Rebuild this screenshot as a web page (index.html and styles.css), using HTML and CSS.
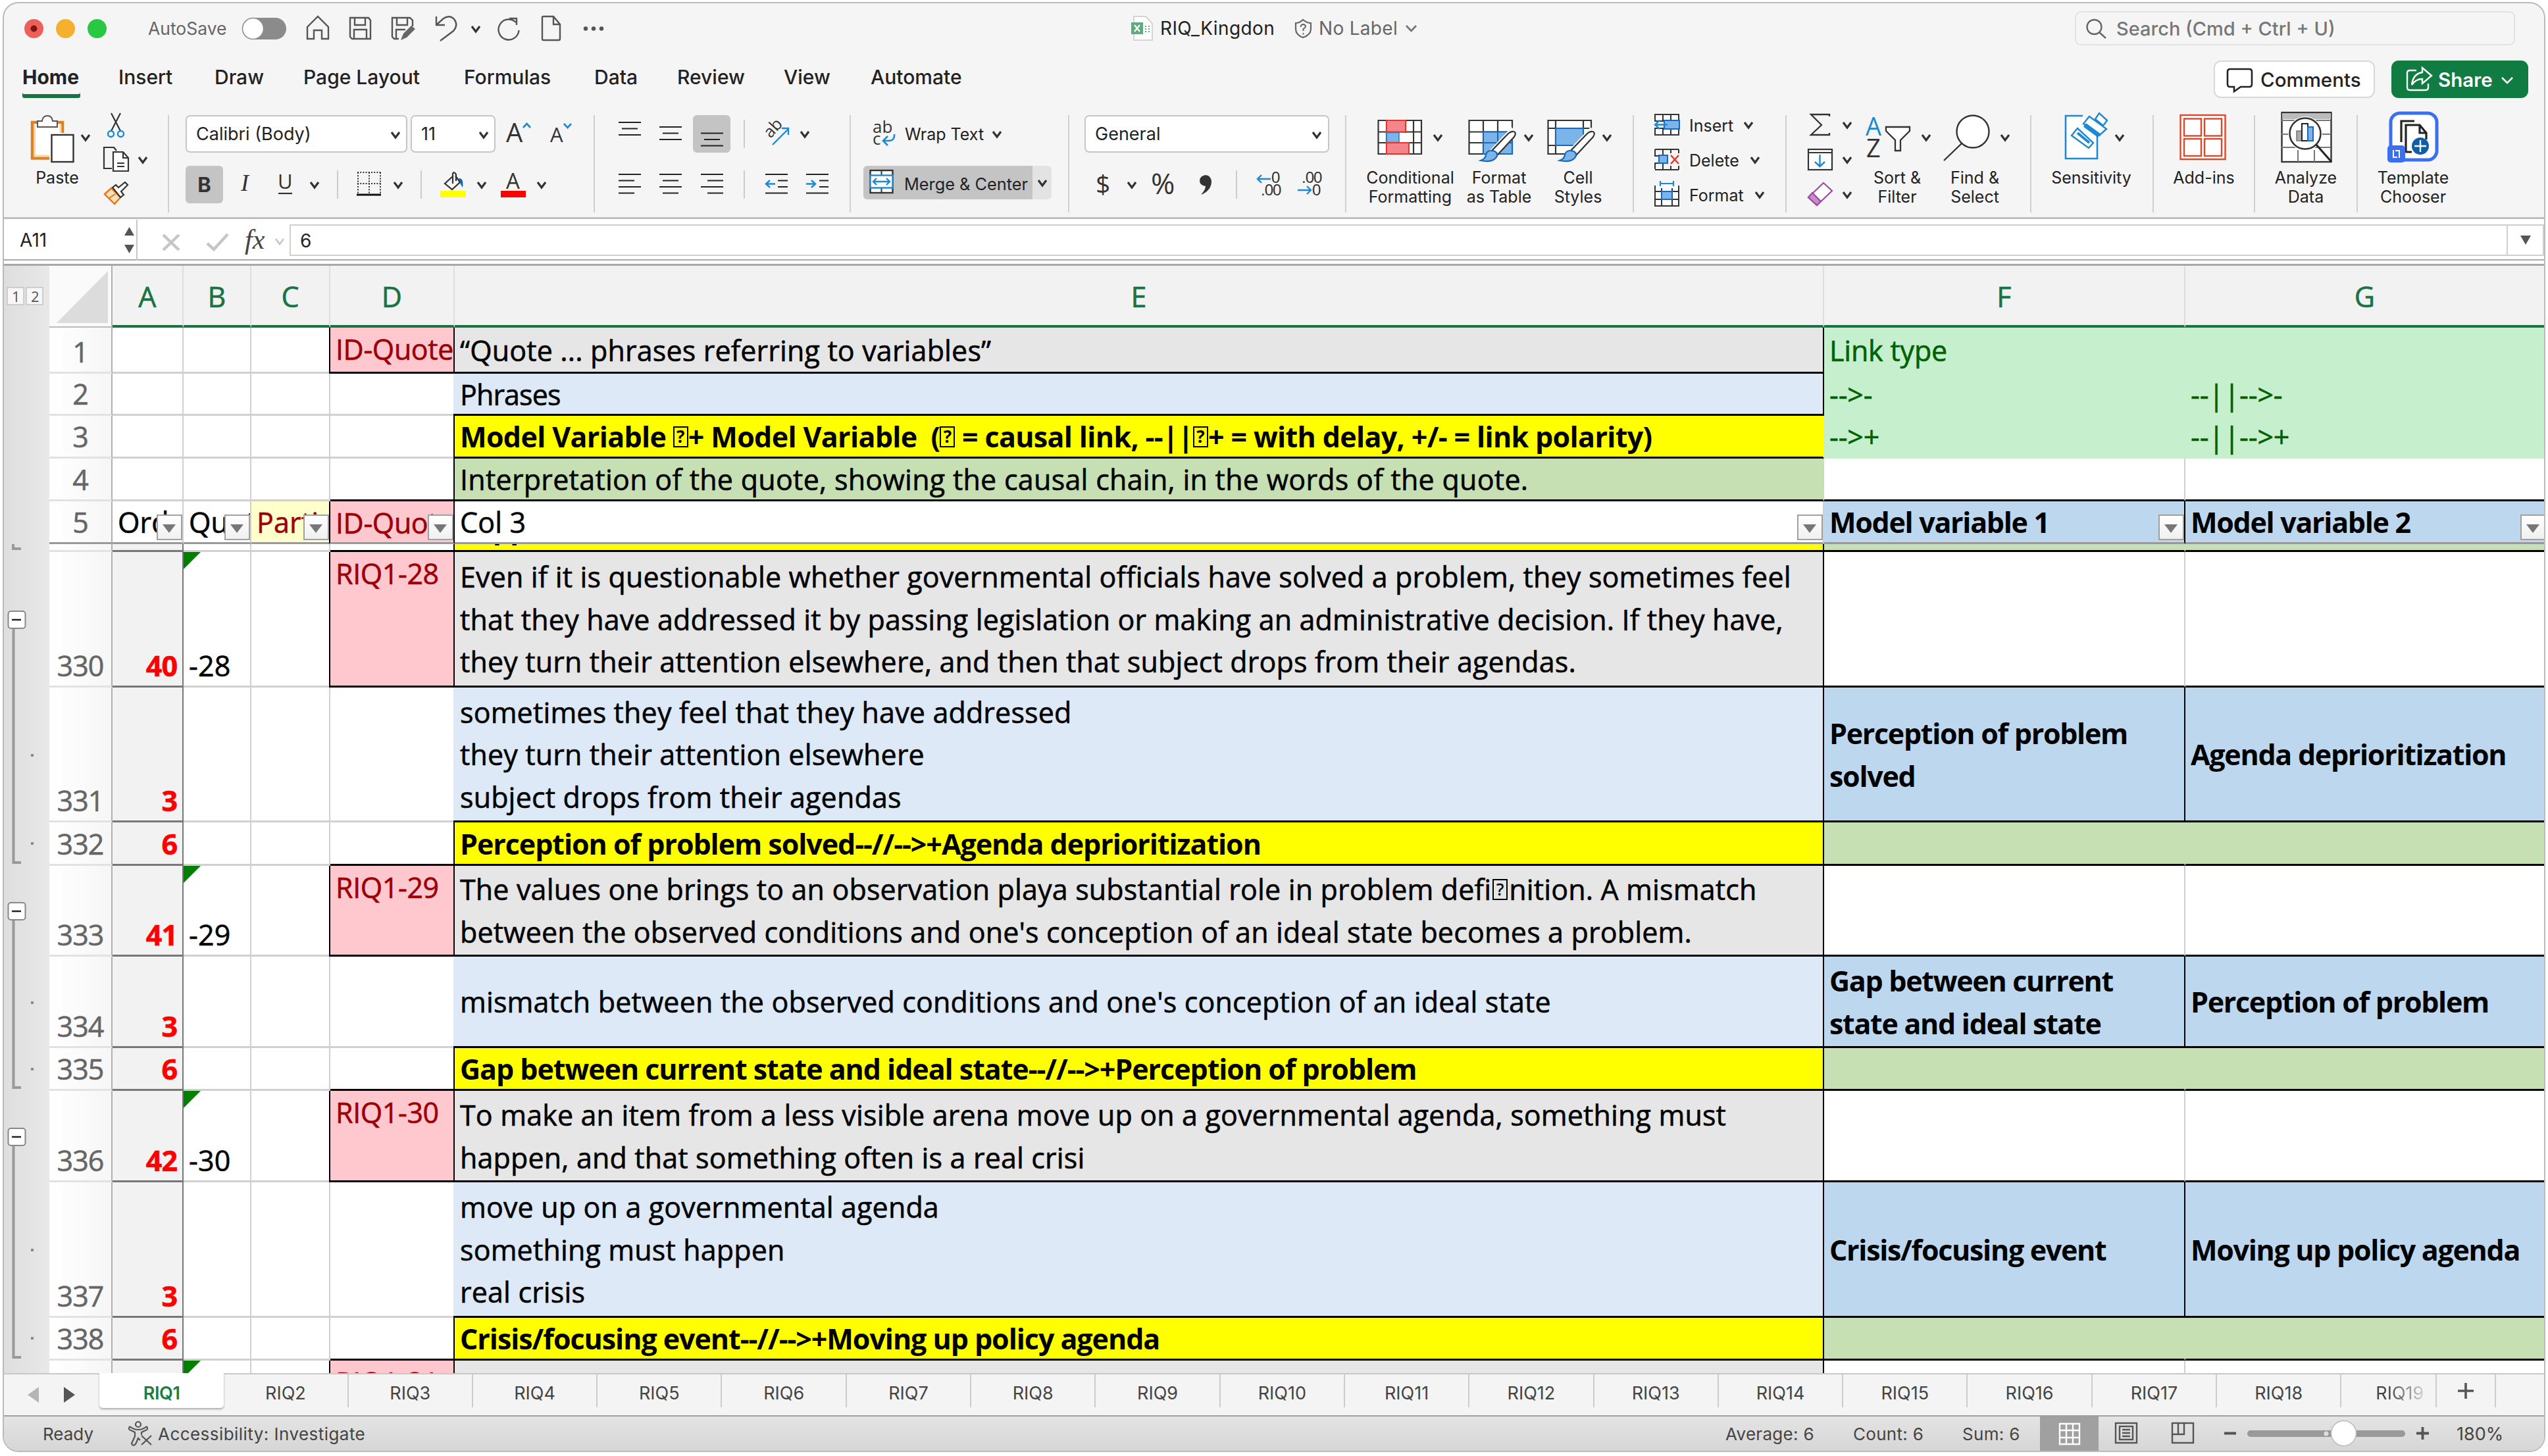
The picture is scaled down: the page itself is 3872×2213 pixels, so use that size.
FILE: index.html
```html
<!DOCTYPE html>
<html lang="en">
<head>
    <meta charset="UTF-8">
    <meta name="viewport" content="width=device-width, initial-scale=1.0">
    <title>RIQ_Kingdon</title>
    <link rel="stylesheet" href="styles.css">
</head>
<body>
<svg class="defs" width="0" height="0">
    <defs>
        <path id="chev" d="M-6 -4 L0 4 L6 -4" fill="none" stroke="#333" stroke-width="3.2"/>
    </defs>
</svg>
<div class="window">
    <header class="titlebar">
        <svg width="219" height="76" viewBox="6 5 219 76">
            <circle cx="51.5" cy="43.5" r="14.5" fill="#ec6059"/><circle cx="51.5" cy="43.5" r="5" fill="#7d1510"/>
            <circle cx="99.5" cy="43.5" r="14.5" fill="#f5b02e"/>
            <circle cx="147.5" cy="43.5" r="14.5" fill="#28c840"/>
        </svg>
        <span class="autosave">AutoSave</span>
        <svg width="585" height="76" viewBox="350 5 585 76">
            <rect x="368" y="27" width="67" height="33" rx="16.5" fill="#8b8b8b"/>
            <circle cx="384.500" cy="43.500" r="16" fill="#fff" stroke="#8b8b8b" stroke-width="1.500"/>
            <g fill="none" stroke="#555" stroke-width="2.4">
                <path d="M467 41 L483 25 L499 41 V59 H489 V46 H477 V59 H467 Z"/>
                <path d="M532 27H560L563 31V59H535L532 56ZM539 27V38H555V27M538 59V45H557V59"/>
                <path d="M606 59H599L596 56V27H623L627 31V40M603 27V38H619V27M602 59V45H616"/>
                <path d="M609 61L613 51L625 39L631 44L618 57Z" fill="#666" stroke="none"/>
                <path d="M663 25V38H676M664 37L674 28Q683 22 690 29Q697 38 689 47L669 62"/>
                <path d="M774 28H785V38M784 34A15.500 15.500 0 1 0 788.500 46"/>
                <path d="M824 26Q824 25 826 25H841L851 37V59Q851 61 849 61H826Q824 61 824 59ZM841 25V37H851"/>
            </g>
            <use href="#chev" x="723" y="44"/>
            <g fill="#555"><circle cx="890" cy="43.500" r="3.200"/><circle cx="902" cy="43.500" r="3.200"/><circle cx="914" cy="43.500" r="3.200"/></g>
        </svg>
        <svg class="file-icon" width="53" height="76" viewBox="1710 5 53 76">
            <path d="M1723 25H1741L1751 36V61H1723Z" fill="#fff" stroke="#c9c9c9" stroke-width="1.500"/>
            <rect x="1719" y="34" width="18" height="18" fill="#5faa7f"/>
            <path d="M1724 38L1732 48M1732 38L1724 48" stroke="#fff" stroke-width="2.200"/>
            <path d="M1740 40h2m3 0h2m-7 4h2m3 0h2m-7 4h2m3 0h2" stroke="#5faa7f" stroke-width="2"/>
        </svg>
        <span class="doc-name">RIQ_Kingdon</span>
        <svg width="66" height="76" viewBox="1938 5 66 76">
            <path d="M1980 30Q1986 35 1992 35V44Q1992 53 1980 57Q1969 53 1969 44V35Q1975 35 1980 30Z" fill="none" stroke="#666" stroke-width="2.200"/>
            <path d="M1976.500 41Q1977 37 1980.500 37Q1984 37.500 1984 40.500Q1983 43 1980.500 44V47M1980.500 50v2.500" fill="none" stroke="#666" stroke-width="2"/>
        </svg>
        <span class="no-label">No Label</span>
        <svg width="40" height="76" viewBox="2125 5 40 76"><path d="M2137 39L2144.500 47L2152 39" fill="none" stroke="#777" stroke-width="2.800"/></svg>
        <div class="search">
            <svg width="61" height="52" viewBox="3155 17 61 52"><circle cx="3182.500" cy="41" r="11" fill="none" stroke="#666" stroke-width="2.400"/><path d="M3190 49L3200 58" stroke="#666" stroke-width="2.400"/></svg>
            <span>Search (Cmd + Ctrl + U)</span>
        </div>
    </header>

    <nav class="menu">
        <a class="m1 on">Home</a><a class="m2">Insert</a><a class="m3">Draw</a><a class="m4">Page Layout</a><a class="m5">Formulas</a><a class="m6">Data</a><a class="m7">Review</a><a class="m8">View</a><a class="m9">Automate</a>
        <div class="btn comments">
            <svg width="51" height="55" viewBox="3386 92 51 55"><path d="M3391 104H3420Q3424 104 3424 108V127Q3424 131 3420 131H3407L3397 138V131H3391Q3387 131 3387 127V108Q3387 104 3391 104Z" fill="none" stroke="#222" stroke-width="2.600"/></svg>
            Comments
        </div>
        <div class="btn share">
            <svg width="51" height="57" viewBox="3657 91 51 57"><g fill="none" stroke="#fff" stroke-width="2.400"><path d="M3675 106H3665Q3661 106 3661 110V132Q3661 136 3665 136H3689Q3693 136 3693 132V126"/><path d="M3684 102L3698 114L3684 126V119Q3674 119 3668 128Q3670 111 3684 109Z"/></g></svg>
            Share
            <svg width="38" height="57" viewBox="3796 91 38 57"><path d="M3810 117L3818 125L3826 117" fill="none" stroke="#fff" stroke-width="2.600"/></svg>
        </div>
    </nav>

    <div class="ribbon">
        <!-- clipboard -->
        <div class="group g-clip">
            <div class="big paste">
                <svg width="130" height="81" viewBox="22 175 130 81">
                    <path d="M49 185H95V241H49Z" fill="#fff"/>
                    <path d="M75 240.500H49V186H56M88 186H95V202" fill="none" stroke="#d9822b" stroke-width="4.500"/>
                    <path d="M75 237H52.500V190M92 190V202" fill="none" stroke="#fbd7a0" stroke-width="3"/>
                    <path d="M57 193V184H64Q65 176 72 176Q79 176 80 184H87V193Z" fill="#fff" stroke="#555" stroke-width="2"/>
                    <rect x="78.500" y="205" width="33" height="41" fill="#fff" stroke="#333" stroke-width="2.400"/>
                    <use href="#chev" x="130" y="209"/>
                </svg>
                <span>Paste</span>
            </div>
            <svg width="100" height="148" viewBox="152 175 100 148">
                <path d="M169 172L183 199M183 172L169 199" stroke="#333" stroke-width="2.200"/>
                <g fill="none" stroke="#1e88d2" stroke-width="2.400"><circle cx="168.500" cy="203.500" r="4.500"/><circle cx="183.500" cy="203.500" r="4.500"/></g>
                <g fill="#fff" stroke="#333" stroke-width="2.200"><path d="M170 256H158V224H173L177 229" fill="none"/><path d="M172 231H187L195 240V260H172Z"/><path d="M187 231V240H195M178 248H189M178 253H189" fill="none"/></g>
                <use href="#chev" x="217" y="243"/>
                <path d="M159 295L169 286L183 300L174 310Z" fill="#fde0b4" stroke="#e8751a" stroke-width="2.400"/>
                <path d="M166 301L175 295" stroke="#e8751a" stroke-width="2"/>
                <path d="M171 285L176 281L180 285L190 277L194 281L184 291L188 296L183 300Z" fill="#fff" stroke="#333" stroke-width="2.200"/>
            </svg>
        </div>

        <!-- font -->
        <div class="group g-font">
            <div class="line">
                <div class="combo font-name">Calibri (Body)<svg width="25" height="20" viewBox="0 0 25 20"><use href="#chev" x="14" y="11"/></svg></div>
                <div class="combo font-size">11<svg width="25" height="20" viewBox="0 0 25 20"><use href="#chev" x="14" y="11"/></svg></div>
                <svg width="148" height="57" viewBox="753 175 148 57">
                    <text x="769" y="216" class="thin" font-size="40">A</text><path d="M795 194L800.500 188L806 194" fill="none" stroke="#1e88d2" stroke-width="2.600"/>
                    <text x="836" y="216" class="thin" font-size="31">A</text><path d="M857 188L862.500 194L868 188" fill="none" stroke="#1e88d2" stroke-width="2.600"/>
                </svg>
            </div>
            <div class="line">
                <div class="pressed bold">B</div>
                <svg width="174" height="57" viewBox="339 252 174 57">
                    <text x="366" y="290" class="ital" font-size="36">I</text>
                    <text x="422" y="287" class="thin" font-size="31">U</text><path d="M423 294H444" stroke="#333" stroke-width="2.200"/>
                    <use href="#chev" x="478" y="281"/>
                    <path d="M513 259V302" stroke="#ccc" stroke-width="2"/>
                </svg>
                <svg width="127" height="57" viewBox="513 252 127 57">
                    <path d="M543 262H579M544 262V294M578 262V294M543 279H579M561 262V294" stroke="#333" stroke-width="2" stroke-dasharray="2 2.200"/>
                    <path d="M542 296H579" stroke="#111" stroke-width="3"/>
                    <use href="#chev" x="605" y="281"/>
                    <path d="M640 259V302" stroke="#ccc" stroke-width="2"/>
                </svg>
                <svg width="261" height="57" viewBox="640 252 261 57">
                    <path d="M688 268L676 279L687 288L699 277L692 267M688 279V264Q690 260 693 265V275" fill="none" stroke="#333" stroke-width="2.200"/>
                    <path d="M697 271Q705 270 703 285Q700 281 699 277Z" fill="#1565b5"/>
                    <rect x="669" y="290" width="39" height="10" fill="#ff0"/>
                    <use href="#chev" x="732" y="281"/>
                    <text x="769" y="287" class="thin" font-size="33">A</text>
                    <rect x="761" y="290" width="38" height="10" fill="red"/>
                    <use href="#chev" x="823" y="281"/>
                </svg>
            </div>
        </div>

        <!-- alignment -->
        <div class="group g-align">
            <div class="line">
                <svg width="149" height="57" viewBox="904 175 149 57"><path d="M940 186H974M945 195.500H969M940 205H974M1002 193H1036M1007 202.500H1031M1002 212H1036" stroke="#222" stroke-width="2.200"/></svg>
                <div class="pressed"><svg width="57" height="57" viewBox="1053 175 57 57"><path d="M1065 202.500H1099M1070 212H1094M1065 221.500H1099" stroke="#222" stroke-width="2.200"/></svg></div>
                <svg width="180" height="57" viewBox="1110 175 180 57">
                    <path d="M1131 182V225" stroke="#ccc" stroke-width="2"/>
                    <text x="1171" y="211" class="thin" font-size="25" transform="rotate(-48 1171 211)">ab</text>
                    <path d="M1174 220L1198 196M1188 195H1198V205" fill="none" stroke="#1e88d2" stroke-width="2.400"/>
                    <use href="#chev" x="1223" y="204"/>
                </svg>
            </div>
            <div class="line">
                <svg width="386" height="57" viewBox="904 252 386 57">
                    <path d="M940 265H974M940 274.500H964M940 284H974M940 293.500H964M1002 265H1036M1007 274.500H1031M1002 284H1036M1007 293.500H1031M1065 265H1099M1075 274.500H1099M1065 284H1099M1075 293.500H1099M1163 265H1197M1182 274.500H1197M1182 284H1197M1163 293.500H1197M1225 265H1259M1245 274.500H1259M1245 284H1259M1225 293.500H1259" stroke="#222" stroke-width="2.200"/>
                    <path d="M1131 259V302" stroke="#ccc" stroke-width="2"/>
                    <path d="M1178 279.500H1164M1170 274L1164 279.500L1170 285M1225 279.500H1239M1233 274L1239 279.500L1233 285" fill="none" stroke="#1e88d2" stroke-width="2.400"/>
                </svg>
            </div>
        </div>

        <!-- wrap / merge -->
        <div class="group g-wrap">
            <div class="line">
                <svg width="63" height="57" viewBox="1312 175 63 57">
                    <text x="1326" y="202" class="thin" font-size="26">ab</text><text x="1326" y="220" class="thin" font-size="26">c</text>
                    <path d="M1359 204Q1360 214 1350 214H1342M1349 207L1342 214L1349 221" fill="none" stroke="#1e88d2" stroke-width="2.600"/>
                </svg>
                <span class="lbl wrap-lbl">Wrap Text</span>
                <svg width="40" height="57" viewBox="1495 175 40 57"><use href="#chev" x="1515" y="204"/></svg>
            </div>
            <div class="line merge">
                <div class="merge-main">
                    <svg width="62" height="57" viewBox="1312 252 62 57">
                        <rect x="1322.500" y="262" width="34" height="34" fill="#fff" stroke="#333" stroke-width="2.400"/>
                        <path d="M1339.500 262V296" stroke="#333" stroke-width="2"/>
                        <rect x="1322.500" y="269.500" width="34" height="19" fill="#fff" stroke="#1e88d2" stroke-width="2.400"/>
                        <path d="M1327 279H1352M1332 274L1327 279L1332 284M1347 274L1352 279L1347 284" fill="none" stroke="#1e88d2" stroke-width="2.400"/>
                    </svg>
                    <span class="lbl merge-lbl">Merge &amp; Center</span>
                </div>
                <svg width="29" height="57" viewBox="1569 252 29 57"><use href="#chev" x="1584" y="281"/></svg>
            </div>
        </div>

        <!-- number -->
        <div class="group g-num">
            <div class="line">
                <div class="combo num-fmt">General<svg width="25" height="20" viewBox="0 0 25 20"><use href="#chev" x="13" y="11"/></svg></div>
            </div>
            <div class="line">
                <svg width="254" height="57" viewBox="1625 252 254 57">
                    <text x="1665" y="294" class="thin" font-size="39">$</text>
                    <use href="#chev" x="1720" y="281"/>
                    <text x="1749" y="295" class="thin" font-size="44">%</text>
                    <path d="M1832 266Q1841 267 1841 277Q1840 290 1825 296Q1832 288 1832 283Q1823 282 1823 274Q1824 267 1832 266Z" fill="#333"/>
                    <path d="M1879 259V302" stroke="#ccc" stroke-width="2"/>
                </svg>
                <svg width="164" height="57" viewBox="1879 252 164 57">
                    <g class="dec"><text x="1932" y="278">0</text><text x="1916" y="297">.00</text><text x="1978" y="278">.00</text><text x="1994" y="297">0</text></g>
                    <path d="M1931 272H1911M1917 266L1911 272L1917 278M1972 289H1992M1986 283L1992 289L1986 295" fill="none" stroke="#1e88d2" stroke-width="2.400"/>
                </svg>
            </div>
        </div>

        <!-- styles -->
        <div class="group g-styles">
            <div class="big cond">
                <svg width="142" height="81" viewBox="2072 175 142 81">
                    <path d="M2094.500 183H2160V234H2094.500ZM2107 183V234M2136 183V234M2148 183V234M2094 200.500H2160M2094 217H2160" fill="#fff" stroke="#333" stroke-width="2.200"/>
                    <rect x="2127" y="202" width="20" height="14" fill="#fff"/>
                    <rect x="2107" y="183" width="29" height="17.500" fill="#f4858b" stroke="#e5352b" stroke-width="2"/>
                    <rect x="2107" y="201.500" width="19" height="15" fill="#7ab4e8" stroke="#2a7ac8" stroke-width="1.500"/>
                    <rect x="2107" y="217" width="34" height="17" fill="#f4858b" stroke="#e5352b" stroke-width="2"/>
                    <use href="#chev" x="2185" y="209"/>
                </svg>
                <span>Conditional<br>Formatting</span>
            </div>
            <div class="big fmt-table">
                <svg width="128" height="81" viewBox="2214 175 128 81">
                    <path d="M2232.500 183H2298V234H2232.500ZM2254 183V234M2276 183V234M2232 200.500H2298M2232 217H2298" fill="#fff" stroke="#333" stroke-width="2.200"/>
                    <path d="M2254 200.500H2298V234H2254ZM2276 200V234M2254 217H2298" fill="#7ab4e8" stroke="#1c68b8" stroke-width="2"/>
                    <path d="M2302 198L2268 234" stroke="#f5f5f5" stroke-width="14"/>
                    <path d="M2300 200Q2305 201 2301 208L2276 235Q2272 229 2267 229L2292 203Q2297 199 2300 200Z" fill="#fff" stroke="#333" stroke-width="2.200"/>
                    <path d="M2265 229Q2276 229 2275 237Q2270 248 2250 244Q2258 241 2258 235Q2260 229 2265 229Z" fill="#7ab4e8" stroke="#1c68b8" stroke-width="2.200"/>
                    <use href="#chev" x="2323" y="209"/>
                </svg>
                <span>Format<br>as Table</span>
            </div>
            <div class="big cell-styles">
                <svg width="112" height="81" viewBox="2342 175 112 81">
                    <path d="M2352.500 183H2418V234H2352.500ZM2364 183V234M2406 183V234M2352 195H2418M2352 221H2418" fill="#fff" stroke="#333" stroke-width="2.200"/>
                    <rect x="2364" y="195" width="42" height="26" fill="#7ab4e8" stroke="#1c68b8" stroke-width="2"/>
                    <path d="M2422 198L2390 232V238H2420V212Z" fill="#f5f5f5"/><path d="M2422 198L2388 234" stroke="#f5f5f5" stroke-width="14"/>
                    <path d="M2420 200Q2425 201 2421 208L2396 235Q2392 229 2387 229L2412 203Q2417 199 2420 200Z" fill="#fff" stroke="#333" stroke-width="2.200"/>
                    <path d="M2385 229Q2396 229 2395 237Q2390 248 2370 244Q2378 241 2378 235Q2380 229 2385 229Z" fill="#7ab4e8" stroke="#1c68b8" stroke-width="2.200"/>
                    <use href="#chev" x="2442" y="209"/>
                </svg>
                <span>Cell<br>Styles</span>
            </div>
        </div>

        <!-- cells -->
        <div class="group g-cells">
            <div class="item">
                <svg width="84" height="53" viewBox="2483 164 84 53">
                    <path d="M2515 174H2551V205H2515ZM2527 174V205M2539 174V205M2515 184H2551M2515 195H2551" fill="#fff" stroke="#333" stroke-width="2"/>
                    <rect x="2513" y="185" width="16" height="9" fill="#fff"/>
                    <rect x="2529" y="183" width="23" height="13" fill="#7ab4e8" stroke="#1c68b8" stroke-width="2"/>
                    <path d="M2534 189.500H2515M2522 183L2515 189.500L2522 196" fill="none" stroke="#1e88d2" stroke-width="2.400"/>
                </svg>
                <span class="lbl">Insert</span>
                <svg width="40" height="53" viewBox="0 0 40 53"><use href="#chev" x="23" y="26"/></svg>
            </div>
            <div class="item">
                <svg width="84" height="53" viewBox="2483 217 84 53">
                    <path d="M2515 227H2551M2515 227V237H2533M2515 257V248H2533M2515 258H2551M2527 227V237M2539 227V233M2527 248V258M2539 252V258M2551 227V233M2551 252V258" fill="none" stroke="#333" stroke-width="2"/>
                    <rect x="2521" y="236" width="13" height="12" fill="#7ab4e8" stroke="#1c68b8" stroke-width="2"/>
                    <path d="M2539 236L2551 249M2551 236L2539 249" stroke="#e5352b" stroke-width="2.400"/>
                </svg>
                <span class="lbl">Delete</span>
                <svg width="40" height="53" viewBox="0 0 40 53"><use href="#chev" x="24" y="26"/></svg>
            </div>
            <div class="item">
                <svg width="84" height="53" viewBox="2483 270 84 53">
                    <path d="M2515 282V313H2551V282M2525 286V313M2541 286V313M2515 291H2551M2515 303H2551" fill="#fff" stroke="#333" stroke-width="2"/>
                    <rect x="2525" y="291" width="16" height="12" fill="#7ab4e8" stroke="#1c68b8" stroke-width="2"/>
                    <path d="M2523 279H2543M2523 275V283M2543 275V283" stroke="#1e88d2" stroke-width="2.200"/>
                </svg>
                <span class="lbl">Format</span>
                <svg width="40" height="53" viewBox="0 0 40 53"><use href="#chev" x="24" y="26"/></svg>
            </div>
        </div>

        <!-- editing -->
        <div class="group g-edit">
            <svg width="108" height="148" viewBox="2715 175 108 148">
                <path d="M2780 177V174H2752L2768 190L2752 205H2780V202" fill="none" stroke="#333" stroke-width="2.300"/>
                <rect x="2748" y="227" width="36" height="31" fill="#fff" stroke="#333" stroke-width="2.200"/><path d="M2748 232H2784" stroke="#333" stroke-width="2.200"/>
                <path d="M2765.500 235V253M2758 246L2765.500 253L2773 246" fill="none" stroke="#1e88d2" stroke-width="2.400"/>
                <path d="M2771 278L2784 290L2761 312L2748 300Z" fill="#fff" stroke="#9a4d9e" stroke-width="2.200"/><path d="M2754 293L2767 306L2761 312L2748 300Z" fill="#c78bc9" stroke="#9a4d9e" stroke-width="2.200"/>
                <use href="#chev" x="2807" y="190"/><use href="#chev" x="2807" y="243"/><use href="#chev" x="2807" y="296"/>
            </svg>
            <div class="big sort">
                <svg width="120" height="81" viewBox="2823 175 120 81">
                    <text x="2835" y="206" font-size="38" class="thin blue">A</text><text x="2836" y="239" font-size="38" class="thin">Z</text>
                    <path d="M2866 193H2902V199L2888 213V229H2880V213L2866 199Z" fill="#fff" stroke="#333" stroke-width="2.300"/>
                    <use href="#chev" x="2927" y="209"/>
                </svg>
                <span>Sort &amp;<br>Filter</span>
            </div>
            <div class="big find">
                <svg width="116" height="81" viewBox="2943 175 116 81">
                    <circle cx="2998" cy="200" r="24.500" fill="#fff" stroke="#333" stroke-width="2.400"/><path d="M2981 218L2954 244" stroke="#333" stroke-width="2.400"/>
                    <use href="#chev" x="3047" y="209"/>
                </svg>
                <span>Find &amp;<br>Select</span>
            </div>
        </div>

        <div class="group g-sens">
            <div class="big">
                <svg width="140" height="81" viewBox="3109 175 140 81">
                    <path d="M3166 176H3140V241H3188V206" fill="#fff" stroke="#1e88d2" stroke-width="2.600"/>
                    <path d="M3158 195L3182 217L3175 225L3149 206Z" fill="#fff" stroke="#1e88d2" stroke-width="2.400"/>
                    <path d="M3158 202L3176 217" stroke="#1e88d2" stroke-width="4"/>
                    <path d="M3176 177L3202 196L3191 206L3167 188Z" fill="#fff" stroke="#1e88d2" stroke-width="2.400"/><path d="M3169 190L3191 206" stroke="#1e88d2" stroke-width="7"/>
                    <path d="M3185 181L3191 172L3203 183L3197 191Z" fill="#fff" stroke="#1e88d2" stroke-width="2.400"/>
                    <use href="#chev" x="3222" y="209"/>
                </svg>
                <span>Sensitivity</span>
            </div>
        </div>

        <div class="group g-add">
            <div class="big">
                <svg width="140" height="81" viewBox="3281 175 140 81">
                    <g fill="#fff" stroke="#d9482b" stroke-width="2.400"><rect x="3315.500" y="175" width="68" height="67"/><rect x="3321" y="180.500" width="26" height="26"/><rect x="3352" y="180.500" width="26" height="26"/><rect x="3321" y="211" width="26" height="26"/><rect x="3352" y="211" width="26" height="26"/></g>
                </svg>
                <span>Add-ins</span>
            </div>
        </div>

        <div class="group g-analyze">
            <div class="big">
                <svg width="140" height="81" viewBox="3436 175 140 81">
                    <rect x="3469.500" y="171" width="75" height="75" fill="#fff" stroke="#333" stroke-width="2.400"/><rect x="3470" y="172" width="74" height="9" fill="#bbb"/>
                    <path d="M3469 183H3544M3469 204H3544M3469 224H3544M3494 228V246M3519 228V246" stroke="#777" stroke-width="2"/>
                    <circle cx="3505" cy="203" r="26" fill="#fff"/><circle cx="3505" cy="203" r="23.500" fill="#fff" stroke="#333" stroke-width="2.600"/>
                    <rect x="3492" y="199" width="8" height="15" fill="#aaa" stroke="#777" stroke-width="1.500"/><rect x="3500" y="188" width="9" height="26" fill="#fff" stroke="#222" stroke-width="2"/><rect x="3509" y="193" width="8" height="21" fill="#7ab4e8" stroke="#1c68b8" stroke-width="2"/>
                    <path d="M3522 220L3545 246" stroke="#222" stroke-width="3"/>
                </svg>
                <span>Analyze<br>Data</span>
            </div>
        </div>

        <div class="group g-tpl">
            <div class="big">
                <svg width="140" height="81" viewBox="3600 175 140 81">
                    <rect x="3636" y="172" width="70" height="71" rx="14" fill="#fff" stroke="#3a6ff0" stroke-width="5"/>
                    <path d="M3672 184H3652V216M3659 232V190H3680L3690 202V212M3680 190V202H3690M3659 231H3668" fill="none" stroke="#222" stroke-width="3.200"/>
                    <circle cx="3681" cy="222" r="13" fill="#0f5fa8"/><path d="M3672 222H3690M3681 213V231" stroke="#fff" stroke-width="2.400"/>
                    <rect x="3631" y="221" width="27" height="26" rx="5" fill="#3a6ff0"/><path d="M3640 228V239H3646M3649 240V229H3643" fill="none" stroke="#fff" stroke-width="2"/>
                </svg>
                <span>Template<br>Chooser</span>
            </div>
        </div>
    </div>

    <div class="formula-bar">
        <div class="name-box">A11<svg width="20" height="44" viewBox="188 341 20 44"><path d="M190 356L197.500 343L205 356ZM190 370H205L197.500 383Z" fill="#555"/></svg></div>
        <svg width="231" height="62" viewBox="208 334 231 62">
            <path d="M247 357L271 380M271 357L247 380" stroke="#c6c6c6" stroke-width="4.500"/>
            <path d="M314 370L324 379L345 356" fill="none" stroke="#c6c6c6" stroke-width="4.500"/>
            <text x="371" y="378" class="fx">fx</text>
            <path d="M418 363L424 371L430 363" fill="none" stroke="#c6c6c6" stroke-width="2.600"/>
        </svg>
        <div class="formula">6</div>
        <div class="expand"><svg width="20" height="16" viewBox="0 0 20 16"><path d="M2 1H18L10 15Z" fill="#555"/></svg></div>
    </div>

    <div class="sheet">
        <svg class="outline" width="69" height="1683" viewBox="6 404 69 1683">
            <g fill="#f7f7f7" stroke="#c4c4c4" stroke-width="1.500"><rect x="11" y="437" width="25" height="26"/><rect x="40" y="437" width="25" height="26"/></g>
            <g class="lvl"><text x="18" y="459">1</text><text x="47" y="459">2</text></g>
            <path d="M20 827V834H32" fill="none" stroke="#999" stroke-width="4"/>
            <path d="M20.500 956V1311H32M20.500 1399V1653H32M20.500 1742V2063H32" fill="none" stroke="#999" stroke-width="4"/>
            <g fill="#fff" stroke="#888" stroke-width="2"><rect x="12.500" y="929" width="26" height="26" rx="4"/><rect x="12.500" y="1372" width="26" height="26" rx="4"/><rect x="12.500" y="1715" width="26" height="26" rx="4"/></g>
            <path d="M18 942H32M18 1385H32M18 1728H32" stroke="#222" stroke-width="2.500"/>
            <path d="M47 1148h4M47 1282h4M47 1524h4M47 1625h4M47 1900h4M47 2034h4" stroke="#888" stroke-width="4"/>
        </svg>
        <div class="grid">
            <div class="row heads">
                <div class="corner"><svg width="95" height="92" viewBox="75 404 95 92"><path d="M164 412V491H86Z" fill="#dcdcdc"/></svg></div>
                <div>A</div><div>B</div><div>C</div><div>D</div><div>E</div><div>F</div><div>G</div>
            </div>

            <div class="row r1">
                <div class="num">1</div><div></div><div></div><div></div>
                <div class="pink">ID-Quote</div>
                <div class="quote">“Quote ... phrases referring to variables”</div>
                <div class="link">Link type</div><div class="link"></div>
            </div>
            <div class="row r2">
                <div class="num">2</div><div></div><div></div><div></div><div></div>
                <div class="phrase short">Phrases</div>
                <div class="link">--&gt;-</div><div class="link">--||--&gt;-</div>
            </div>
            <div class="row r3">
                <div class="num">3</div><div></div><div></div><div></div><div></div>
                <div class="model no-right"><p>Model Variable <i class="tofu">?</i>+ Model Variable&nbsp; (<i class="tofu">?</i> = causal link, --||<i class="tofu">?</i>+ = with delay, +/- = link polarity)</p></div>
                <div class="link">--&gt;+</div><div class="link">--||--&gt;+</div>
            </div>
            <div class="row r4">
                <div class="num">4</div><div></div><div></div><div></div><div class="under"></div>
                <div class="interp">Interpretation of the quote, showing the causal chain, in the words of the quote.</div>
                <div class="under"></div><div class="under"></div>
            </div>
            <div class="row r5">
                <div class="num">5</div>
                <div>Ord<b class="filter"></b></div>
                <div>Quot<b class="filter"></b></div>
                <div class="part">Parti:<b class="filter"></b></div>
                <div class="pink">ID-Quot<b class="filter"></b></div>
                <div>Col 3<b class="filter"></b></div>
                <div class="var">Model variable 1<b class="filter"></b></div>
                <div class="var">Model variable 2<b class="filter last"></b></div>
            </div>

            <!-- scrolled area below the frozen rows -->
            <div class="row r329">
                <div class="num"></div><div class="ord"></div><div></div><div></div><div class="under"></div>
                <div class="model"><p>Support</p></div><div class="green"></div><div class="green"></div>
            </div>
            <div class="row r330">
                <div class="num">330</div><div class="ord">40</div><div class="neg">-28</div><div></div>
                <div class="pink">RIQ1-28</div>
                <div class="quote"><p>Even if it is questionable whether governmental officials have solved a problem, they sometimes feel<br>that they have addressed it by passing legislation or making an administrative decision. If they have,<br>they turn their attention elsewhere, and then that subject drops from their agendas.</p></div>
                <div class="under"></div><div class="under"></div>
            </div>
            <div class="row r331">
                <div class="num">331</div><div class="ord">3</div><div></div><div></div><div></div>
                <div class="phrase"><p>sometimes they feel that they have addressed<br>they turn their attention elsewhere<br>subject drops from their agendas</p></div>
                <div class="var"><p>Perception of problem<br>solved</p></div><div class="var"><p>Agenda deprioritization</p></div>
            </div>
            <div class="row r332">
                <div class="num">332</div><div class="ord">6</div><div></div><div></div><div class="under"></div>
                <div class="model"><p>Perception of problem solved--//--&gt;+Agenda deprioritization</p></div><div class="green"></div><div class="green"></div>
            </div>
            <div class="row r333">
                <div class="num">333</div><div class="ord">41</div><div class="neg">-29</div><div></div>
                <div class="pink">RIQ1-29</div>
                <div class="quote"><p>The values one brings to an observation playa substantial role in problem defi<i class="tofu">?</i>nition. A mismatch<br>between the observed conditions and one's conception of an ideal state becomes a problem.</p></div>
                <div class="under"></div><div class="under"></div>
            </div>
            <div class="row r334">
                <div class="num">334</div><div class="ord">3</div><div></div><div></div><div></div>
                <div class="phrase"><p>mismatch between the observed conditions and one's conception of an ideal state</p></div>
                <div class="var"><p>Gap between current<br>state and ideal state</p></div><div class="var"><p>Perception of problem</p></div>
            </div>
            <div class="row r335">
                <div class="num">335</div><div class="ord">6</div><div></div><div></div><div class="under"></div>
                <div class="model"><p>Gap between current state and ideal state--//--&gt;+Perception of problem</p></div><div class="green"></div><div class="green"></div>
            </div>
            <div class="row r336">
                <div class="num">336</div><div class="ord">42</div><div class="neg">-30</div><div></div>
                <div class="pink">RIQ1-30</div>
                <div class="quote"><p>To make an item from a less visible arena move up on a governmental agenda, something must<br>happen, and that something often is a real crisi</p></div>
                <div class="under"></div><div class="under"></div>
            </div>
            <div class="row r337">
                <div class="num">337</div><div class="ord">3</div><div></div><div></div><div></div>
                <div class="phrase"><p>move up on a governmental agenda<br>something must happen<br>real crisis</p></div>
                <div class="var"><p>Crisis/focusing event</p></div><div class="var"><p>Moving up policy agenda</p></div>
            </div>
            <div class="row r338">
                <div class="num">338</div><div class="ord">6</div><div></div><div></div><div class="under"></div>
                <div class="model"><p>Crisis/focusing event--//--&gt;+Moving up policy agenda</p></div><div class="green"></div><div class="green"></div>
            </div>
            <div class="row r339">
                <div class="num"></div><div class="ord"></div><div class="neg"></div><div></div>
                <div class="pink">RIQ1-31</div><div class="quote"></div><div></div><div></div>
            </div>
        </div>
    </div>

    <div class="tabs">
        <svg width="145" height="62" viewBox="6 2094 145 62"><path d="M59 2113V2137L42 2125Z" fill="#b5b5b5"/><path d="M97 2113V2137L114 2125Z" fill="#555"/></svg>
        <a class="on">RIQ1</a><a>RIQ2</a><a>RIQ3</a><a>RIQ4</a><a>RIQ5</a><a>RIQ6</a><a>RIQ7</a><a>RIQ8</a><a>RIQ9</a><a>RIQ10</a><a>RIQ11</a><a>RIQ12</a><a>RIQ13</a><a>RIQ14</a><a>RIQ15</a><a>RIQ16</a><a>RIQ17</a><a>RIQ18</a><a class="cut">RIQ19</a>
        <a class="add"><svg width="24" height="24" viewBox="0 0 24 24"><path d="M12 0V24M0 12H24" stroke="#555" stroke-width="3.600"/></svg></a>
    </div>

    <footer class="status">
        <span class="ready">Ready</span>
        <svg width="46" height="52" viewBox="194 2157 46 52"><g fill="none" stroke="#555" stroke-width="2.200"><circle cx="210" cy="2169" r="4"/><path d="M197 2172Q194 2177 199 2178L205 2181V2187L200 2198Q202 2203 206 2199L210 2190L213 2193M223 2172Q226 2177 221 2178L215 2181V2185M197 2172Q203 2177 210 2177Q217 2177 223 2172M215 2186L230 2200M230 2186L215 2200"/></g></svg>
        <span class="acc">Accessibility: Investigate</span>
        <span class="avg">Average: 6</span><span class="cnt">Count: 6</span><span class="sum">Sum: 6</span>
        <div class="view on"><svg width="32" height="33" viewBox="0 0 32 33"><path d="M1 1H31V32H1ZM11 1V32M21 1V32M1 11H31M1 22H31" fill="none" stroke="#fff" stroke-width="2.400"/></svg></div>
        <svg width="183" height="54" viewBox="3192 2156 183 54"><g fill="none" stroke="#555" stroke-width="2.400"><rect x="3218" y="2167" width="32" height="30"/><rect x="3224" y="2172" width="20" height="20"/><path d="M3228 2177H3240M3228 2182H3240M3228 2187H3240"/><rect x="3304" y="2167" width="32" height="30"/><path d="M3304 2184H3322V2167M3313 2167V2184"/></g></svg>
        <svg width="325" height="54" viewBox="3375 2156 325 54">
            <path d="M3383 2182.500H3401M3675 2182.500H3694M3684.500 2173V2192" stroke="#555" stroke-width="3.800"/>
            <rect x="3418" y="2178" width="240" height="10" rx="5" fill="#999"/><circle cx="3538" cy="2183" r="3.500" fill="#ddd"/>
            <circle cx="3564.500" cy="2182.500" r="19" fill="#fff" stroke="#bbb" stroke-width="1.500"/>
        </svg>
        <span class="zoom">180%</span>
    </footer>
</div>
</body>
</html>
```
FILE: styles.css
```css
* {
    box-sizing: border-box;
}

body {
    margin: 0;
    background: #fff;
    font-family: Inter, "Liberation Sans", sans-serif;
    color: #222;
    height: 2213px;
    overflow: hidden;
}

svg {
    display: block;
    flex: none;
    overflow: visible;
}

.defs {
    position: absolute;
}

p {
    margin: 0;
}

.window {
    width: 3860px;
    height: 2200px;
    margin: 5px 0 0 6px;
    background: #f5f5f5;
    border-radius: 22px;
    overflow: hidden;
    display: flex;
    flex-direction: column;
    box-shadow: 0 0 0 2px #bbb;
}

/* title bar */
.titlebar {
    display: flex;
    align-items: center;
    height: 76px;
    font-size: 28px;
    white-space: nowrap;
}

.autosave {
    width: 125px;
    color: #666;
    font-size: 26.500px;
}

.file-icon {
    margin-left: 775px;
}

.doc-name {
    width: 175px;
    letter-spacing: 0.400px;
}

.no-label {
    width: 121px;
    color: #666;
    letter-spacing: 0.300px;
}

.search {
    display: flex;
    align-items: center;
    width: 669px;
    height: 52px;
    margin-left: auto;
    margin-right: 44px;
    border: 2px solid #e2e2e2;
    border-radius: 9px;
    color: #777;
    font-weight: 500;
    font-size: 29px;
}

/* menu */
.menu {
    display: flex;
    align-items: center;
    height: 79px;
    padding-left: 28px;
    font-size: 30px;
    font-weight: 500;
    white-space: nowrap;
}

.menu a {
    height: 56px;
    line-height: 48px;
}

.menu .on {
    font-weight: 700;
    box-shadow: inset 0 -6px #1a7343;
    border-radius: 3px;
    width: 88px;
    margin-right: 58px;
}

.m2 { width: 146px; }
.m3 { width: 135px; }
.m4 { width: 244px; }
.m5 { width: 198px; }
.m6 { width: 126px; }
.m7 { width: 162px; }
.m8 { width: 132px; }
.m9 { width: 150px; }

.btn {
    display: flex;
    align-items: center;
    height: 57px;
    border-radius: 11px;
    font-size: 29.500px;
}

.comments {
    width: 245px;
    margin-left: auto;
    padding-left: 18px;
    background: #fff;
    border: 2px solid #d8d8d8;
}

.share {
    width: 208px;
    margin: 0 24px 0 25px;
    padding-left: 20px;
    background: #107c41;
    color: #fff;
    font-weight: 600;
}

/* ribbon */
.ribbon {
    display: flex;
    height: 173px;
    padding-top: 15px;
    border-bottom: 3px solid #c0c0c0;
    font-size: 25px;
}

.group {
    display: flex;
    height: 148px;
    border-right: 2px solid #d0d0d0;
}

.group:last-child {
    border: 0;
}

.big {
    display: flex;
    flex-direction: column;
    align-items: center;
    line-height: 29px;
    text-align: center;
    white-space: nowrap;
}

.line {
    display: flex;
    align-items: center;
    height: 57px;
    margin-bottom: 20px;
}

.lbl {
    white-space: nowrap;
}

.g-clip { width: 251px; padding-left: 16px; }
.g-font { width: 647px; padding-left: 25px; flex-direction: column; }
.g-align { width: 389px; flex-direction: column; }
.g-wrap { width: 332px; padding-left: 19px; flex-direction: column; }
.g-num { width: 421px; flex-direction: column; }
.g-styles { width: 437px; padding-left: 26px; }
.g-cells { width: 232px; flex-direction: column; }
.g-edit { width: 372px; }
.g-sens { width: 186px; padding-left: 21px; }
.g-add { width: 154px; padding-left: 6px; }
.g-analyze { width: 156px; padding-left: 7px; }
.g-tpl { padding-left: 14px; }

.combo {
    display: flex;
    align-items: center;
    justify-content: space-between;
    height: 57px;
    padding: 0 5px 0 14px;
    background: #fff;
    border: 2px solid #c6c6c6;
    border-radius: 7px;
    font-size: 27px;
}

.font-name { width: 337px; margin-right: 5px; }
.font-size { width: 129px; }
.num-fmt { width: 372px; margin-left: 23px; }

.pressed {
    width: 57px;
    height: 57px;
    border-radius: 6px;
    background: #c4c4c4;
}

.bold {
    font-weight: 700;
    font-size: 31px;
    line-height: 57px;
    text-align: center;
    color: #333;
}

.wrap-lbl {
    width: 120px;
}

.merge {
    width: 286px;
    background: #e3e3e3;
    border-radius: 6px;
    overflow: hidden;
}

.merge-main {
    display: flex;
    align-items: center;
    width: 257px;
    background: #c4c4c4;
}

.merge-lbl {
    padding-top: 3px;
    font-size: 25.300px;
}

.item {
    display: flex;
    align-items: center;
    height: 53px;
}

.g-cells .item:first-child {
    margin-top: -11px;
}

.thin {
    font-family: "Open Sans", sans-serif;
    fill: #333;
}

.blue {
    fill: #1e88d2;
}

.ital {
    font-family: "Liberation Serif", serif;
    font-style: italic;
    fill: #333;
}

.dec {
    font-size: 24px;
    font-family: "Liberation Sans", sans-serif;
    fill: #333;
    letter-spacing: -1px;
}

/* formula bar */
.formula-bar {
    display: flex;
    align-items: center;
    height: 71px;
    background: #fff;
    border-bottom: 3px solid #a8a8a8;
    box-shadow: inset 0 -5px #fff, inset 0 -7px #aaa;
    font-size: 28px;
    padding-bottom: 5px;
}

.name-box {
    display: flex;
    align-items: center;
    justify-content: space-between;
    width: 203px;
    height: 62px;
    padding-left: 24px;
    border-right: 2px solid #c8c8c8;
}

.fx {
    font-family: "Liberation Serif", serif;
    font-style: italic;
    font-size: 42px;
    fill: #444;
}

.formula {
    flex: 1;
    height: 48px;
    line-height: 46px;
    padding-left: 14px;
    border: 2px solid #cfcfcf;
    border-right: 0;
}

.expand {
    display: flex;
    align-items: center;
    justify-content: center;
    width: 57px;
    height: 48px;
    border: 2px solid #cfcfcf;
}

/* sheet */
.sheet {
    display: flex;
    height: 1683px;
    background: #fff;
    font-family: "Open Sans", sans-serif;
    font-size: 43px;
    line-height: 64.600px;
    letter-spacing: 0.150px;
    color: #000;
    -webkit-text-stroke: 0.600px;
}

.outline {
    background: linear-gradient(90deg, #dedede, #e8e8e8);
}

.lvl {
    font-size: 22px;
    fill: #555;
}

.grid {
    overflow: hidden;
    height: 1683px;
}

.row {
    display: grid;
    grid-template-columns: 96px 108px 103px 120px 189px 2081px 549px 545px;
    width: 3791px;
}

.row > div {
    position: relative;
    display: flex;
    align-items: center;
    min-width: 0;
    overflow: hidden;
    padding: 3px 0 0 8px;
    border-right: 2px solid #d0d0d0;
    border-bottom: 3px solid #d0d0d0;
    white-space: nowrap;
    background: #fff;
}

.row > div:last-child {
    border-right: 0;
}

.row.heads > div {
    justify-content: center;
    padding: 5px 0 0;
    background: #f2f2f2;
    border-right-color: #dedede;
    border-bottom: 4px solid #1a7343;
    color: #1a7343;
}

.row.heads .corner {
    padding: 0;
    background: #fafafa;
    border-right-color: #b0b0b0;
    border-bottom: 2px solid #bbb;
}

.heads { height: 94px; }
.r1 { height: 70px; }
.r2 { height: 64px; }
.r3, .r4, .r5 { height: 65px; }
.r329 { height: 12px; }
.r330 { height: 206px; }
.r331 { height: 205px; }
.r332 { height: 66px; }
.r333 { height: 138px; }
.r334 { height: 139px; }
.r335 { height: 65px; }
.r336 { height: 139px; }
.r337 { height: 206px; }
.r338 { height: 65px; }
.r339 { height: 19px; }

.row > .num {
    justify-content: center;
    align-items: flex-end;
    padding: 0;
    color: #666;
    background: linear-gradient(90deg, #fff, #f6f6f6);
    border-right-color: #b0b0b0;
    border-bottom-color: #e2e2e2;
    letter-spacing: -1px;
    line-height: 60px;
}

.row > .ord {
    justify-content: flex-end;
    align-items: flex-end;
    padding-right: 8px;
    background: #f2f2f2;
    border-color: #777;
    color: red;
    font-weight: 700;
    letter-spacing: -1px;
    line-height: 60px;
}

.row > .neg {
    align-items: flex-end;
    line-height: 60px;
}

.neg::before {
    content: "";
    position: absolute;
    left: 0;
    top: 0;
    width: 26px;
    height: 26px;
    background: #008000;
    clip-path: polygon(0 0, 100% 0, 0 100%);
}

.row > .pink {
    align-items: flex-start;
    margin-left: -2px;
    border-left: 2px solid #000;
    border-color: #000;
    background: #ffc7ce;
    color: #9c0006;
    line-height: 60px;
    letter-spacing: -0.400px;
}

.row > .quote {
    background: #e7e6e6;
    border-color: #000;
}

.row > .phrase {
    margin-left: -2px;
    padding-left: 10px;
    background: #dde9f7;
    border-color: #000;
}

.row > .short {
    letter-spacing: -0.900px;
}

.row > .model {
    margin-left: -2px;
    border-left: 2px solid #000;
    border-color: #000;
    background: #ff0;
    font-weight: 700;
    letter-spacing: -1.050px;
    -webkit-text-stroke: 0;
}

.row > .interp {
    margin-left: -2px;
    border-left: 2px solid #000;
    background: #c6e0b4;
    border-bottom-color: #000;
    border-right-color: #c6e0b4;
    letter-spacing: 0.270px;
}

.row > .no-right {
    border-right-color: #ff0;
    letter-spacing: -0.650px;
}

.row > .link {
    background: #c6efce;
    border-color: #c6efce;
    color: #006100;
    letter-spacing: -0.200px;
}

.row > .under {
    border-bottom-color: #000;
}

.row > .var {
    background: #bdd7ee;
    border-color: #000;
    font-weight: 700;
    letter-spacing: -1.300px;
    -webkit-text-stroke: 0;
}

.row > .green {
    background: #c6e0b4;
    border-bottom-color: #000;
    border-right-color: #c6e0b4;
}

.row > .part {
    background: #ffffcc;
    color: #9c0006;
}

.row.r5 > div {
    border-bottom: 3px solid #999;
}

.row.r339 > div {
    border-bottom: 0;
}

.r329 p {
    margin-top: -60px;
}

.filter {
    position: absolute;
    right: 0;
    bottom: 3px;
    width: 39px;
    height: 39px;
    background: linear-gradient(#fff, #f0f0f0);
    border: 2px solid #a0a0a0;
}

.filter.last {
    right: -3px;
}

.filter::after {
    content: "";
    position: absolute;
    left: 7px;
    top: 13px;
    border: 10px solid transparent;
    border-top: 13px solid #777;
    border-bottom: 0;
}

.tofu {
    display: inline-block;
    width: 23px;
    height: 32px;
    border: 2.500px solid #000;
    overflow: hidden;
    font: 700 26px/27px "Open Sans", sans-serif;
    text-align: center;
    letter-spacing: 0;
}

.quote .tofu {
    font-weight: 400;
    border-width: 2px;
    margin: 0 2px;
}

/* sheet tabs */
.tabs {
    display: flex;
    height: 64px;
    border-top: 2px solid #c8c8c8;
    background: #f4f4f4;
    font-size: 27px;
    color: #444;
}

.tabs a {
    width: 189.300px;
    height: 50px;
    line-height: 57px;
    text-align: center;
    border-right: 2px solid #ccc;
}

.tabs .on {
    height: 53px;
    margin-top: -2px;
    line-height: 61px;
    background: #fff;
    color: #1a7f43;
    font-weight: 600;
    letter-spacing: -0.400px;
    border-right: 0;
    border-radius: 0 0 5px 5px;
    box-shadow: 0 2px 3px #aaa;
}

.tabs .cut {
    width: 145px;
    padding-left: 34px;
    overflow: hidden;
    background: linear-gradient(90deg, #444 50%, #eee 95%);
    background-clip: text;
    color: transparent;
}

.tabs .add {
    width: 90px;
    display: flex;
    align-items: center;
    justify-content: center;
}

/* status bar */
.status {
    display: flex;
    align-items: center;
    height: 54px;
    border-top: 2px solid #a0a0a0;
    background: linear-gradient(#e4e4e4, #d6d6d6);
    font-size: 26px;
    color: #444;
    white-space: nowrap;
}

.ready { width: 129px; margin-left: 59px; }
.acc { width: 345px; letter-spacing: 0.450px; }
.avg { width: 194px; margin-left: auto; letter-spacing: 0.300px; }
.cnt { width: 166px; letter-spacing: 0.300px; }
.sum { width: 118px; letter-spacing: 0.300px; }
.zoom { width: 133px; margin-left: 36px; font-size: 27px; }

.view {
    display: flex;
    align-items: center;
    justify-content: center;
    width: 89px;
    height: 52px;
    background: #a0a0a0;
}
```
